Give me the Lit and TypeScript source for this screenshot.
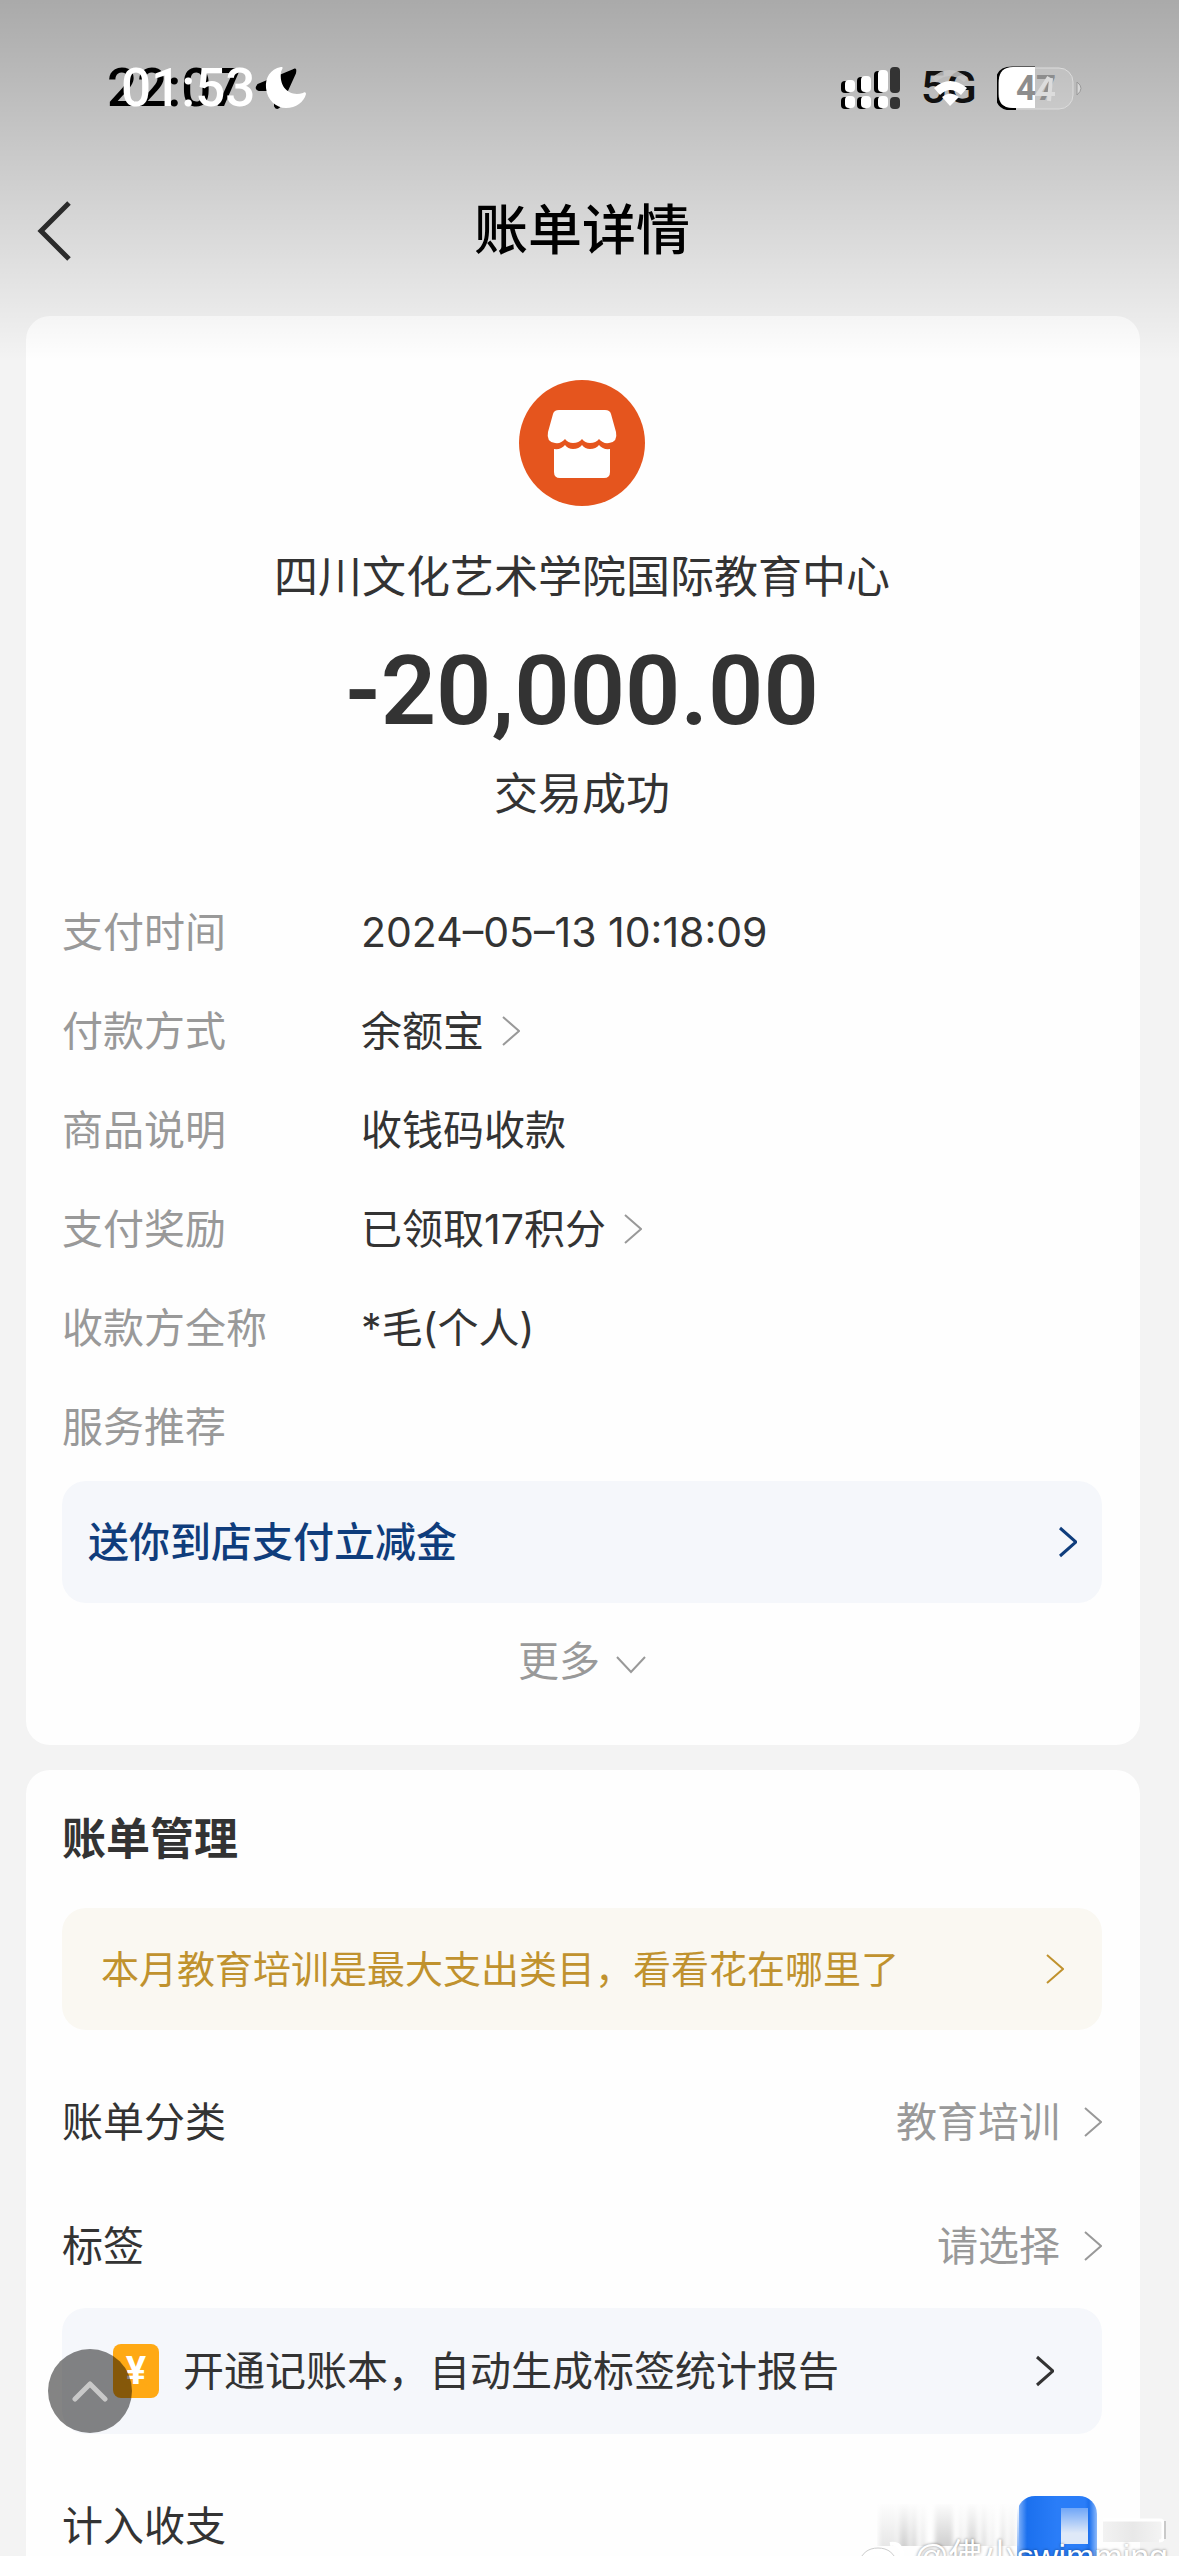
import { LitElement, html, css, svg } from "lit";
import { customElement, property, state } from "lit/decorators.js";

interface Detail {
  label: string;
  value: string;
  link?: boolean;
}

const DETAILS: Detail[] = [
  { label: "支付时间", value: "2024–05–13 10:18:09" },
  { label: "付款方式", value: "余额宝", link: true },
  { label: "商品说明", value: "收钱码收款" },
  { label: "支付奖励", value: "已领取17积分", link: true },
  { label: "收款方全称", value: "*毛(个人)" },
  { label: "服务推荐", value: "" },
];

const right = (cls = "") => html`
  <svg class="chev ${cls}" viewBox="0 0 20 32" aria-hidden="true">
    <path d="M3 2 L19 16 L3 30" />
  </svg>
`;

/* Phone status bar: two readings laid over each other. */
@customElement("status-bar")
export class StatusBar extends LitElement {
  static styles = css`
    :host {
      display: flex;
      justify-content: space-between;
      align-items: center;
      height: 176px;
      padding: 0 96px 0 107px;
      font-family: Roboto, "Liberation Sans", sans-serif;
    }
    .group {
      display: flex;
      align-items: center;
    }
    .stack {
      display: grid;
      align-items: center;
    }
    .stack > * {
      grid-area: 1 / 1;
    }
    .time {
      font-size: 53px;
      line-height: 56px;
      font-weight: 500;
      color: #000;
    }
    .time.late {
      color: #fff;
      margin-left: 14px;
    }
    .network {
      font-size: 45px;
      line-height: 56px;
      font-weight: 500;
      color: #111;
    }
    .right {
      gap: 20px;
    }
    svg {
      display: block;
    }
    .battery {
      position: relative;
    }
    .level {
      position: absolute;
      inset: 1px 8px 0 0;
      display: grid;
      place-items: center;
      font-size: 35px;
      font-weight: 700;
      line-height: 42px;
      color: #8d8d8d;
    }
    .ghost {
      position: absolute;
      inset: 0;
    }
  `;

  render() {
    const bars = [
      [0, 14, 12],
      [16, 10, 16],
      [33, 4, 22],
      [49, 0, 26],
    ];
    return html`
      <div class="group">
        <div class="stack">
          <span class="time">22:07</span>
          <span class="time late">01:53</span>
        </div>
        <svg width="56" height="44" viewBox="0 0 56 44" aria-hidden="true">
          <path
            d="M39 4 L3 19 Q0 23 4 24 L20 24 L20 40 Q22 44 25 40 L40 7 Q41 2 39 4Z"
            fill="#000" stroke="#000" stroke-width="2" stroke-linejoin="round"
          />
          <path
            d="M26 1 C15 3 10 12 11 22 C12 34 21 42 31 42 C41 42 49 36 51 28 C51 26 49 26 48 27 C34 31 24 21 26 6 C27 3 29 1 26 1Z"
            fill="#fff"
          />
        </svg>
      </div>
      <div class="group right">
        <svg width="60" height="42" viewBox="0 0 60 42" aria-hidden="true">
          ${bars.map(
            ([x, y, h], i) => svg`
              <rect x=${x} y=${y} width="10" height=${h} rx="4" fill=${i === 3 ? "#333" : "#000"} />
              <rect x=${x} y="30" width="10" height="12" rx="4" fill=${i === 3 ? "#333" : "#000"} />
              ${
                i < 3
                  ? svg`
                    <rect x=${x + 4} y=${y - 1} width="10" height=${h} rx="4" fill="#fff" />
                    <rect x=${x + 4} y="29" width="10" height="12" rx="4" fill="#fff" />`
                  : null
              }
            `
          )}
        </svg>
        <div class="stack">
          <span class="network">5G</span>
          <svg width="53" height="44" viewBox="0 0 53 44" aria-hidden="true">
            <path d="M11 12 Q28 -4 47 12 L43 16 Q28 4 15 16Z" fill="#c6c6c6" opacity="0.85" />
            <path d="M13 22 Q29 8 46 22 L40 29 Q29 19 19 29Z" fill="#fff" />
            <path d="M21 31 Q29 24 38 31 L29 40Z" fill="#fff" />
          </svg>
        </div>
        <div class="battery">
          <svg width="86" height="44" viewBox="0 0 86 44" aria-hidden="true">
            <rect x="1" y="2" width="75" height="41" rx="14" fill="#fff" fill-opacity="0.14" stroke="#dcdcdc" stroke-width="1" />
            <path d="M38 2 H15 Q0 2 0 17 V28 Q0 43 15 43 H19" fill="none" stroke="#000" stroke-width="3" />
            <path d="M38 1 H16 Q2 1 2 15 V28 Q2 42 16 42 H38Z" fill="#fff" />
            <path d="M80 16 Q88 22 80 29Z" fill="#d8d8d8" stroke="#999" stroke-width="1" />
          </svg>
          <span class="level">47</span>
          <svg class="ghost" width="86" height="44" viewBox="0 0 86 44" aria-hidden="true">
            <path d="M52 11 L41 28 H58 M54 12 L52 35" fill="none" stroke="#dcdcdc" stroke-width="4" />
          </svg>
        </div>
      </div>
    `;
  }
}

@customElement("app-root")
export class AppRoot extends LitElement {
  @property({ type: String }) merchant = "四川文化艺术学院国际教育中心";
  @state() private counted = true;

  static styles = css`
    :host {
      display: block;
      position: relative;
      height: 100vh;
      overflow: hidden;
      background: #f3f3f3;
      color: #333;
      font-family: Inter, "Noto Sans CJK SC", sans-serif;
      font-size: 41px;
      line-height: 60px;
    }
    * {
      box-sizing: border-box;
    }
    button {
      border: 0;
      margin: 0;
      padding: 0;
      background: none;
      font: inherit;
      color: inherit;
      text-align: left;
      cursor: pointer;
    }
    .shade {
      position: absolute;
      inset: 0 0 auto 0;
      height: 360px;
      background: linear-gradient(rgba(0, 0, 0, 0.3), rgba(0, 0, 0, 0));
      pointer-events: none;
      z-index: 1;
    }
    header {
      position: relative;
      z-index: 2;
    }
    nav {
      display: grid;
      grid-template-columns: 60px 1fr 60px;
      align-items: center;
      height: 140px;
      padding: 0 39px 30px 24px;
    }
    .back {
      display: flex;
      justify-content: center;
    }
    .back svg {
      width: 38px;
      height: 60px;
      fill: none;
      stroke: #2b2b2b;
      stroke-width: 5;
    }
    h1 {
      margin: 0;
      text-align: center;
      font-size: 54px;
      line-height: 60px;
      font-weight: 500;
      color: #000;
    }
    main {
      display: flex;
      flex-direction: column;
      gap: 25px;
      padding: 0 39px 0 26px;
    }
    .card {
      background: #fefefe;
      border-radius: 24px;
      padding: 0 38px 0 36px;
    }
    .summary {
      display: flex;
      flex-direction: column;
      align-items: center;
      padding-top: 64px;
    }
    .shop {
      width: 126px;
      height: 126px;
    }
    .merchant,
    .result {
      font-size: 44px;
      margin: 0;
    }
    .merchant {
      margin-top: 41px;
    }
    .amount {
      margin: 28px 0 17px;
      font-family: Roboto, sans-serif;
      font-size: 97px;
      font-weight: 600;
      line-height: 112px;
    }
    dl {
      margin: 58px 0 5px;
    }
    .detail {
      display: grid;
      grid-template-columns: 299px 1fr;
      align-items: center;
      height: 99px;
    }
    dt {
      color: #999;
    }
    dd {
      margin: 0;
    }
    .value {
      display: flex;
      align-items: center;
      gap: 16px;
    }
    .chev {
      flex: none;
      width: 20px;
      height: 32px;
      fill: none;
      stroke: #999;
      stroke-width: 2;
    }
    .chev.blue {
      stroke: #0f3d7c;
      stroke-width: 3;
    }
    .chev.gold {
      stroke: #c0922e;
    }
    .chev.dark {
      stroke: #333;
      stroke-width: 3;
    }
    .banner {
      display: flex;
      align-items: center;
      justify-content: space-between;
      width: 100%;
      height: 122px;
      border-radius: 24px;
      background: #f5f7fb;
    }
    .promo {
      padding: 0 25px 0 26px;
      color: #0f3d7c;
      font-weight: 500;
    }
    .insight {
      padding: 0 38px 0 39px;
      background: #faf8f2;
      color: #c0922e;
      font-size: 38px;
    }
    .book {
      height: 126px;
      padding: 0 48px 0 51px;
    }
    .booktext {
      display: flex;
      align-items: center;
      gap: 24px;
    }
    .yen {
      width: 46px;
      height: 54px;
      border-radius: 8px;
      background: #ffa914;
      color: #fff;
      font: 700 38px/54px Roboto, sans-serif;
      text-align: center;
    }
    .more {
      display: flex;
      align-items: center;
      justify-content: center;
      gap: 16px;
      width: 100%;
      height: 116px;
      margin-bottom: 26px;
      color: #999;
    }
    .down {
      width: 30px;
      height: 20px;
      margin-top: 8px;
      fill: none;
      stroke: #999;
      stroke-width: 2;
    }
    h2 {
      margin: 0;
      font-size: 44px;
      font-weight: 700;
      line-height: 138px;
    }
    .rows {
      margin-top: 30px;
    }
    .row {
      display: flex;
      align-items: center;
      justify-content: space-between;
      width: 100%;
      height: 124px;
    }
    .choice {
      display: flex;
      align-items: center;
      gap: 22px;
      color: #999;
    }
    .last {
      margin-top: 30px;
    }
    .switch {
      appearance: none;
      width: 80px;
      height: 60px;
      margin: 0 5px 0 0;
      border-radius: 18px 18px 0 0;
      background:
        linear-gradient(#6fa6f8, #dfe9f8 70%) 44px 12px / 27px 36px no-repeat,
        linear-gradient(90deg, #8cb9fb, #1b70ee 10px, #2a7df8 40px, #2a7df8 68px, #1b70ee 72px, #8cb9fb);
    }
    .top {
      position: absolute;
      left: 48px;
      bottom: 123px;
      width: 84px;
      height: 84px;
      border-radius: 50%;
      background: rgba(0, 0, 0, 0.48);
      display: grid;
      place-items: center;
      z-index: 2;
    }
    .top svg {
      width: 38px;
      height: 22px;
      fill: none;
      stroke: #c8c8c8;
      stroke-width: 5;
      stroke-linecap: round;
      stroke-linejoin: round;
    }
    .mark {
      position: absolute;
      right: 11px;
      bottom: -22px;
      display: flex;
      align-items: flex-end;
      gap: 8px;
      color: #fff;
      font: 34px/44px "Liberation Sans", "Noto Sans CJK SC", sans-serif;
      text-shadow: 0 0 3px rgba(0, 0, 0, 0.5);
      white-space: nowrap;
      z-index: 3;
    }
    .smear {
      position: absolute;
      right: 8px;
      bottom: 0;
      width: 294px;
      height: 56px;
      z-index: 2;
      pointer-events: none;
    }
  `;

  private streaks() {
    const lines: [number, number, string][] = [
      [2, 18, "#e6e6e6"],
      [22, 10, "#cfcfcf"],
      [34, 6, "#d6d6d6"],
      [44, 4, "#e2e2e2"],
      [58, 18, "#cdcdcd"],
      [82, 4, "#e6e6e6"],
      [90, 10, "#d2d2d2"],
      [104, 6, "#dedede"],
      [114, 3, "#e4e4e4"],
      [124, 4, "#d9d9d9"],
      [132, 6, "#e8e8e8"],
    ];
    return html`
      <svg class="smear" viewBox="0 0 294 56" aria-hidden="true">
        <defs>
          <linearGradient id="fade" x1="0" y1="0" x2="0" y2="1">
            <stop offset="0" stop-color="#fefefe" />
            <stop offset="1" stop-color="#fefefe" stop-opacity="0" />
          </linearGradient>
          <linearGradient id="tab" x1="0" y1="0" x2="1" y2="0">
            <stop offset="0" stop-color="#f2f2f2" />
            <stop offset="0.5" stop-color="#e8e8e8" />
            <stop offset="1" stop-color="#f4f4f4" />
          </linearGradient>
          <filter id="soft" x="-20%" width="140%"><feGaussianBlur stdDeviation="2 0" /></filter>
        </defs>
        <g filter="url(#soft)">
          ${lines.map(([x, w, c]) => svg`<rect x=${x} y="4" width=${w} height="42" fill=${c} />`)}
        </g>
        <rect x="-8" y="2" width="150" height="46" fill="url(#fade)" />
        <path d="M226 20 H282 Q286 20 286 24 V38 Q286 42 282 42 H226Z" fill="url(#tab)" />
        <path d="M226 20 H283 Q286 20 286 23 V38 Q286 41 282 41" fill="none" stroke="#fff" stroke-width="3" />
        <path d="M288 21 V39" stroke="#c9c9c9" stroke-width="2" />
      </svg>
    `;
  }

  render() {
    return html`
      <div class="shade"></div>
      <header>
        <status-bar></status-bar>
        <nav>
          <button class="back" aria-label="返回">
            <svg viewBox="0 0 38 60"><path d="M34 2 L6 30 L34 58" /></svg>
          </button>
          <h1>账单详情</h1>
        </nav>
      </header>
      <main>
        <section class="card">
          <div class="summary">
            <svg class="shop" viewBox="0 0 126 126" aria-hidden="true">
              <circle cx="63" cy="63" r="63" fill="#e5551e" />
              <path
                d="M40 30 H86 Q91 30 92 34 L97 52 Q99 62 90 63 Q84 64 80 59 Q77 63 71 63 Q66 63 63 59 Q60 63 54 63 Q49 63 46 59 Q42 64 36 63 Q27 62 29 52 L34 34 Q35 30 40 30Z"
                fill="#fff"
              />
              <path
                d="M35 69 Q42 70 46 65 Q49 69 54 69 Q60 69 63 65 Q66 69 71 69 Q77 69 80 65 Q84 70 91 69 V92 Q91 98 85 98 H41 Q35 98 35 92Z"
                fill="#fff"
              />
            </svg>
            <p class="merchant">${this.merchant}</p>
            <div class="amount">-20,000.00</div>
            <p class="result">交易成功</p>
          </div>
          <dl>
            ${DETAILS.map(
              (d) => html`
                <div class="detail">
                  <dt>${d.label}</dt>
                  <dd>
                    ${d.link
                      ? html`<button class="value">${d.value}${right()}</button>`
                      : d.value}
                  </dd>
                </div>
              `
            )}
          </dl>
          <button class="banner promo">送你到店支付立减金${right("blue")}</button>
          <button class="more">
            更多
            <svg class="down" viewBox="0 0 30 20"><path d="M1 2 L15 17 L29 2" /></svg>
          </button>
        </section>
        <section class="card">
          <h2>账单管理</h2>
          <button class="banner insight">
            本月教育培训是最大支出类目，看看花在哪里了${right("gold")}
          </button>
          <div class="rows">
            <button class="row">账单分类<span class="choice">教育培训${right()}</span></button>
            <button class="row">标签<span class="choice">请选择${right()}</span></button>
          </div>
          <button class="banner book">
            <span class="booktext"><span class="yen">¥</span>开通记账本，自动生成标签统计报告</span>
            ${right("dark")}
          </button>
          <div class="row last">
            <label for="counted">计入收支</label>
            <input
              id="counted"
              class="switch"
              type="checkbox"
              role="switch"
              .checked=${this.counted}
              @change=${(e: Event) => (this.counted = (e.target as HTMLInputElement).checked)}
            />
          </div>
        </section>
      </main>
      <button class="top" aria-label="回到顶部">
        <svg viewBox="0 0 38 22"><path d="M4 19 L19 4 L34 19" /></svg>
      </button>
      ${this.streaks()}
      <div class="mark">
        <svg width="48" height="40" viewBox="0 0 48 40" aria-hidden="true">
          <ellipse cx="20" cy="24" rx="18" ry="14" fill="#fff" stroke="#ccc" />
          <ellipse cx="20" cy="27" rx="11" ry="8" fill="#ccc" />
          <path d="M32 6 Q44 4 44 18" fill="none" stroke="#fff" stroke-width="4" />
        </svg>
        <span>@佛小swimming</span>
      </div>
    `;
  }
}
